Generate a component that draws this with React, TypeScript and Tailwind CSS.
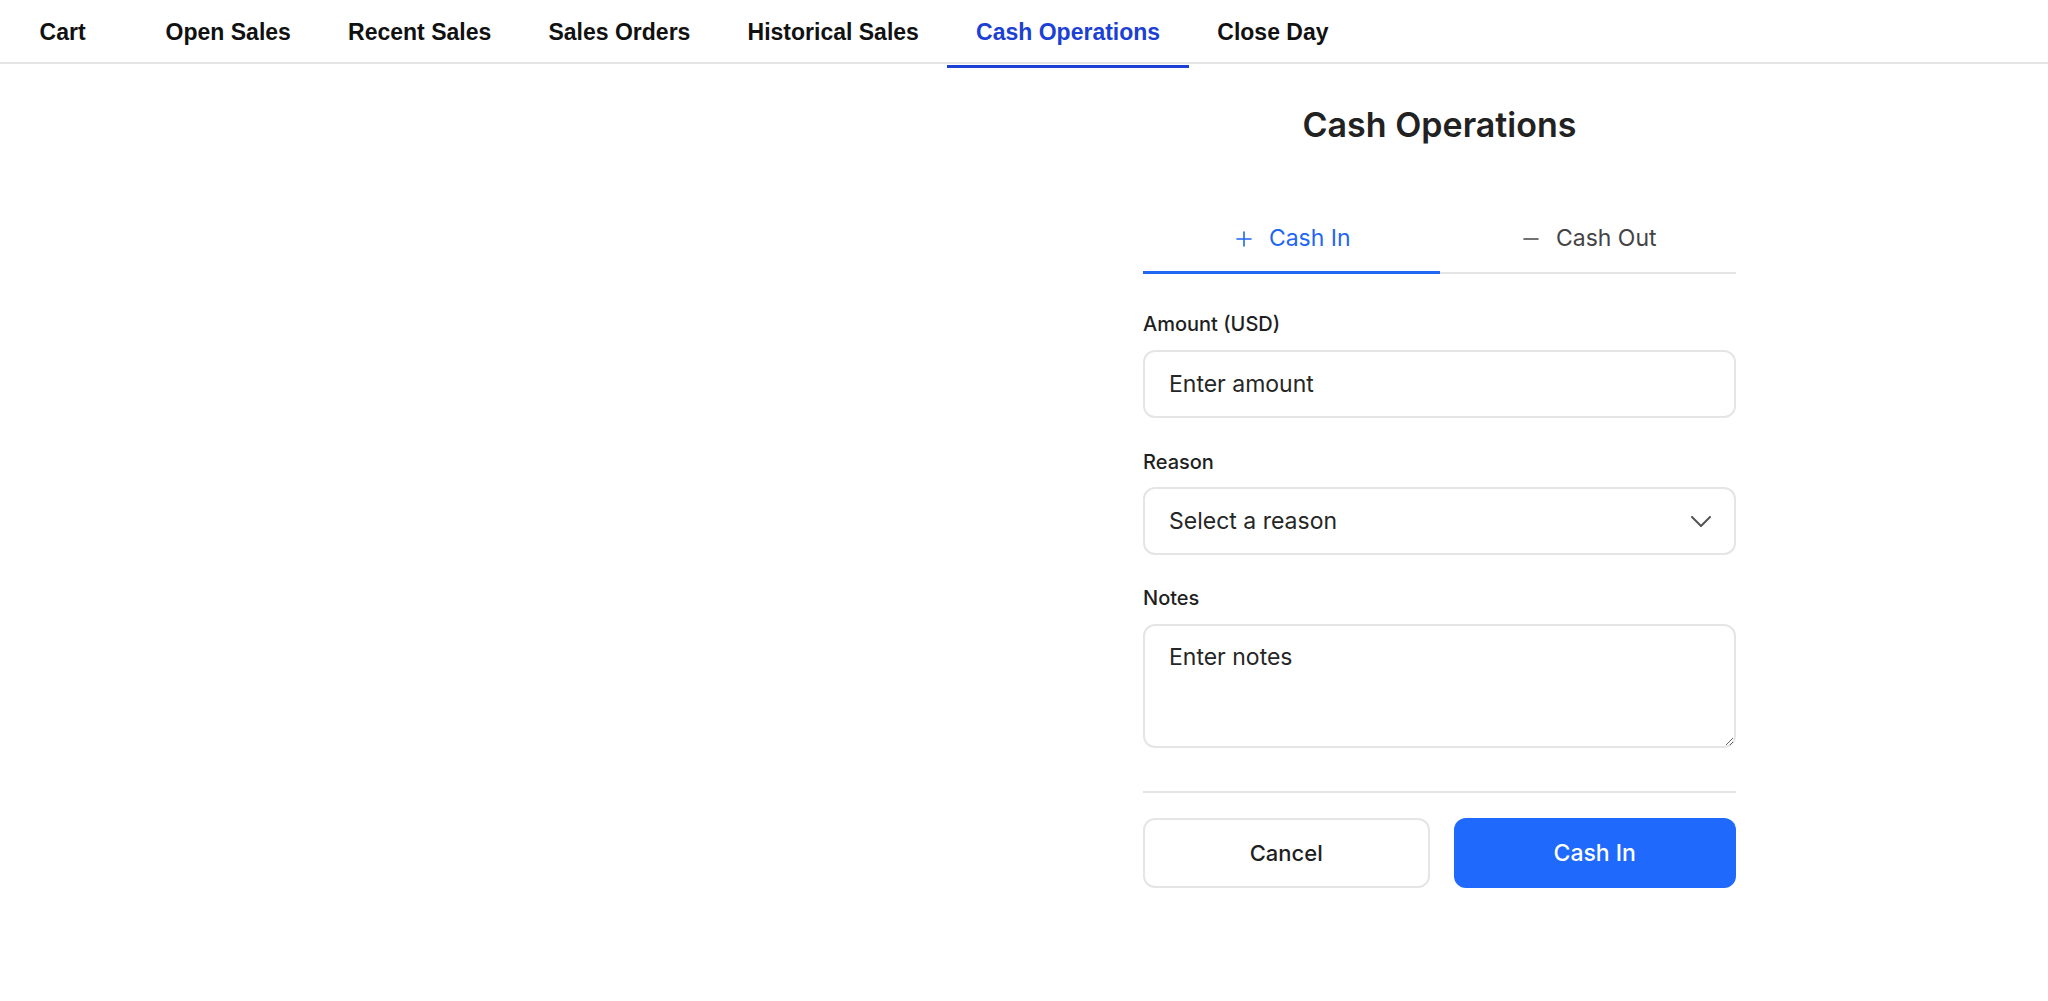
import { Plus, Minus } from "lucide-react";

const navItems = [
  "Cart",
  "Open Sales",
  "Recent Sales",
  "Sales Orders",
  "Historical Sales",
  "Cash Operations",
  "Close Day",
];

const activeNav = "Cash Operations";

function TopNav() {
  return (
    <nav className="flex h-[64px] items-stretch border-b-2 border-[#e4e5e7] pl-[11px] font-['Liberation_Sans',Arial,sans-serif]">
      {navItems.map((item) => {
        const active = item === activeNav;
        return (
          <div
            key={item}
            className={`relative flex min-w-[126px] items-center px-[28.6px] pt-[3px] text-[23px] font-bold ${
              active ? "text-[#1c3fd4]" : "text-[#111111]"
            }`}
          >
            {item}
            {active && (
              <span className="absolute left-0 right-0 top-[calc(100%+3px)] h-[3px] bg-[#1c3fd4]" />
            )}
          </div>
        );
      })}
    </nav>
  );
}

function CashForm() {
  return (
    <div className="mx-auto flex w-[593px] flex-col font-['Inter',sans-serif] text-[#222222]">
      {/* Title */}
      <h1 className="mt-[42px] text-center text-[34px] font-semibold leading-[37px] text-[#222222]">
        Cash Operations
      </h1>

      {/* Cash In / Cash Out tabs */}
      <div className="mt-[66px] flex items-end">
        <button className="flex flex-1 items-center justify-center gap-[13px] border-b-[3px] border-[#1f66f2] pt-4 pb-[19px] text-[23px] leading-[27px] text-[#1f66f2]">
          <Plus size={24} strokeWidth={1.6} />
          Cash In
        </button>
        <button className="flex flex-1 items-center justify-center gap-[13px] border-b-2 border-[#e4e5e7] pt-4 pb-[20px] text-[23px] leading-[27px] text-[#444444]">
          <Minus size={24} strokeWidth={1.6} />
          Cash Out
        </button>
      </div>

      {/* Amount */}
      <label className="mt-[38px] text-[20px] font-medium leading-[24px] text-[#1f1f1f]">Amount (USD)</label>
      <input
        type="text"
        placeholder="Enter amount"
        className="mt-[14px] h-[68px] rounded-[12px] border-2 border-[#e4e5e7] px-6 text-[23px] outline-none placeholder:text-[#262626]"
      />

      {/* Reason */}
      <label className="mt-[32px] text-[20px] font-medium leading-[24px] text-[#1f1f1f]">Reason</label>
      <button className="mt-[13px] flex h-[68px] items-center justify-between rounded-[12px] border-2 border-[#e4e5e7] pl-6 pr-[23px] text-left text-[23px] text-[#262626]">
        Select a reason
        <svg width="20" height="11" viewBox="0 0 20 11" fill="none">
          <polyline points="1,1 10,10 19,1" stroke="#555555" strokeWidth="2" strokeLinecap="round" strokeLinejoin="round" />
        </svg>
      </button>

      {/* Notes */}
      <label className="mt-[31px] text-[20px] font-medium leading-[24px] text-[#1f1f1f]">Notes</label>
      <textarea
        placeholder="Enter notes"
        className="mt-[14px] h-[124px] rounded-[12px] border-2 border-[#e4e5e7] px-6 pt-[18px] text-[23px] leading-[27px] outline-none placeholder:text-[#262626]"
      />

      <div className="mt-[43px] h-[2px] bg-[#e4e5e7]" />

      {/* Actions */}
      <div className="mt-[25px] flex gap-6">
        <button className="h-[70px] flex-1 rounded-[12px] border-2 border-[#e4e5e7] bg-white text-[22px] font-medium text-[#1f1f1f]">
          Cancel
        </button>
        <button className="h-[70px] flex-1 rounded-[12px] bg-[#1f69fc] text-[23px] font-medium text-white">
          Cash In
        </button>
      </div>
    </div>
  );
}

export default function App() {
  return (
    <div className="min-h-screen bg-white">
      <TopNav />
      <div className="flex">
        <div className="w-[831px]" />
        <div className="flex-1">
          <CashForm />
        </div>
      </div>
    </div>
  );
}
